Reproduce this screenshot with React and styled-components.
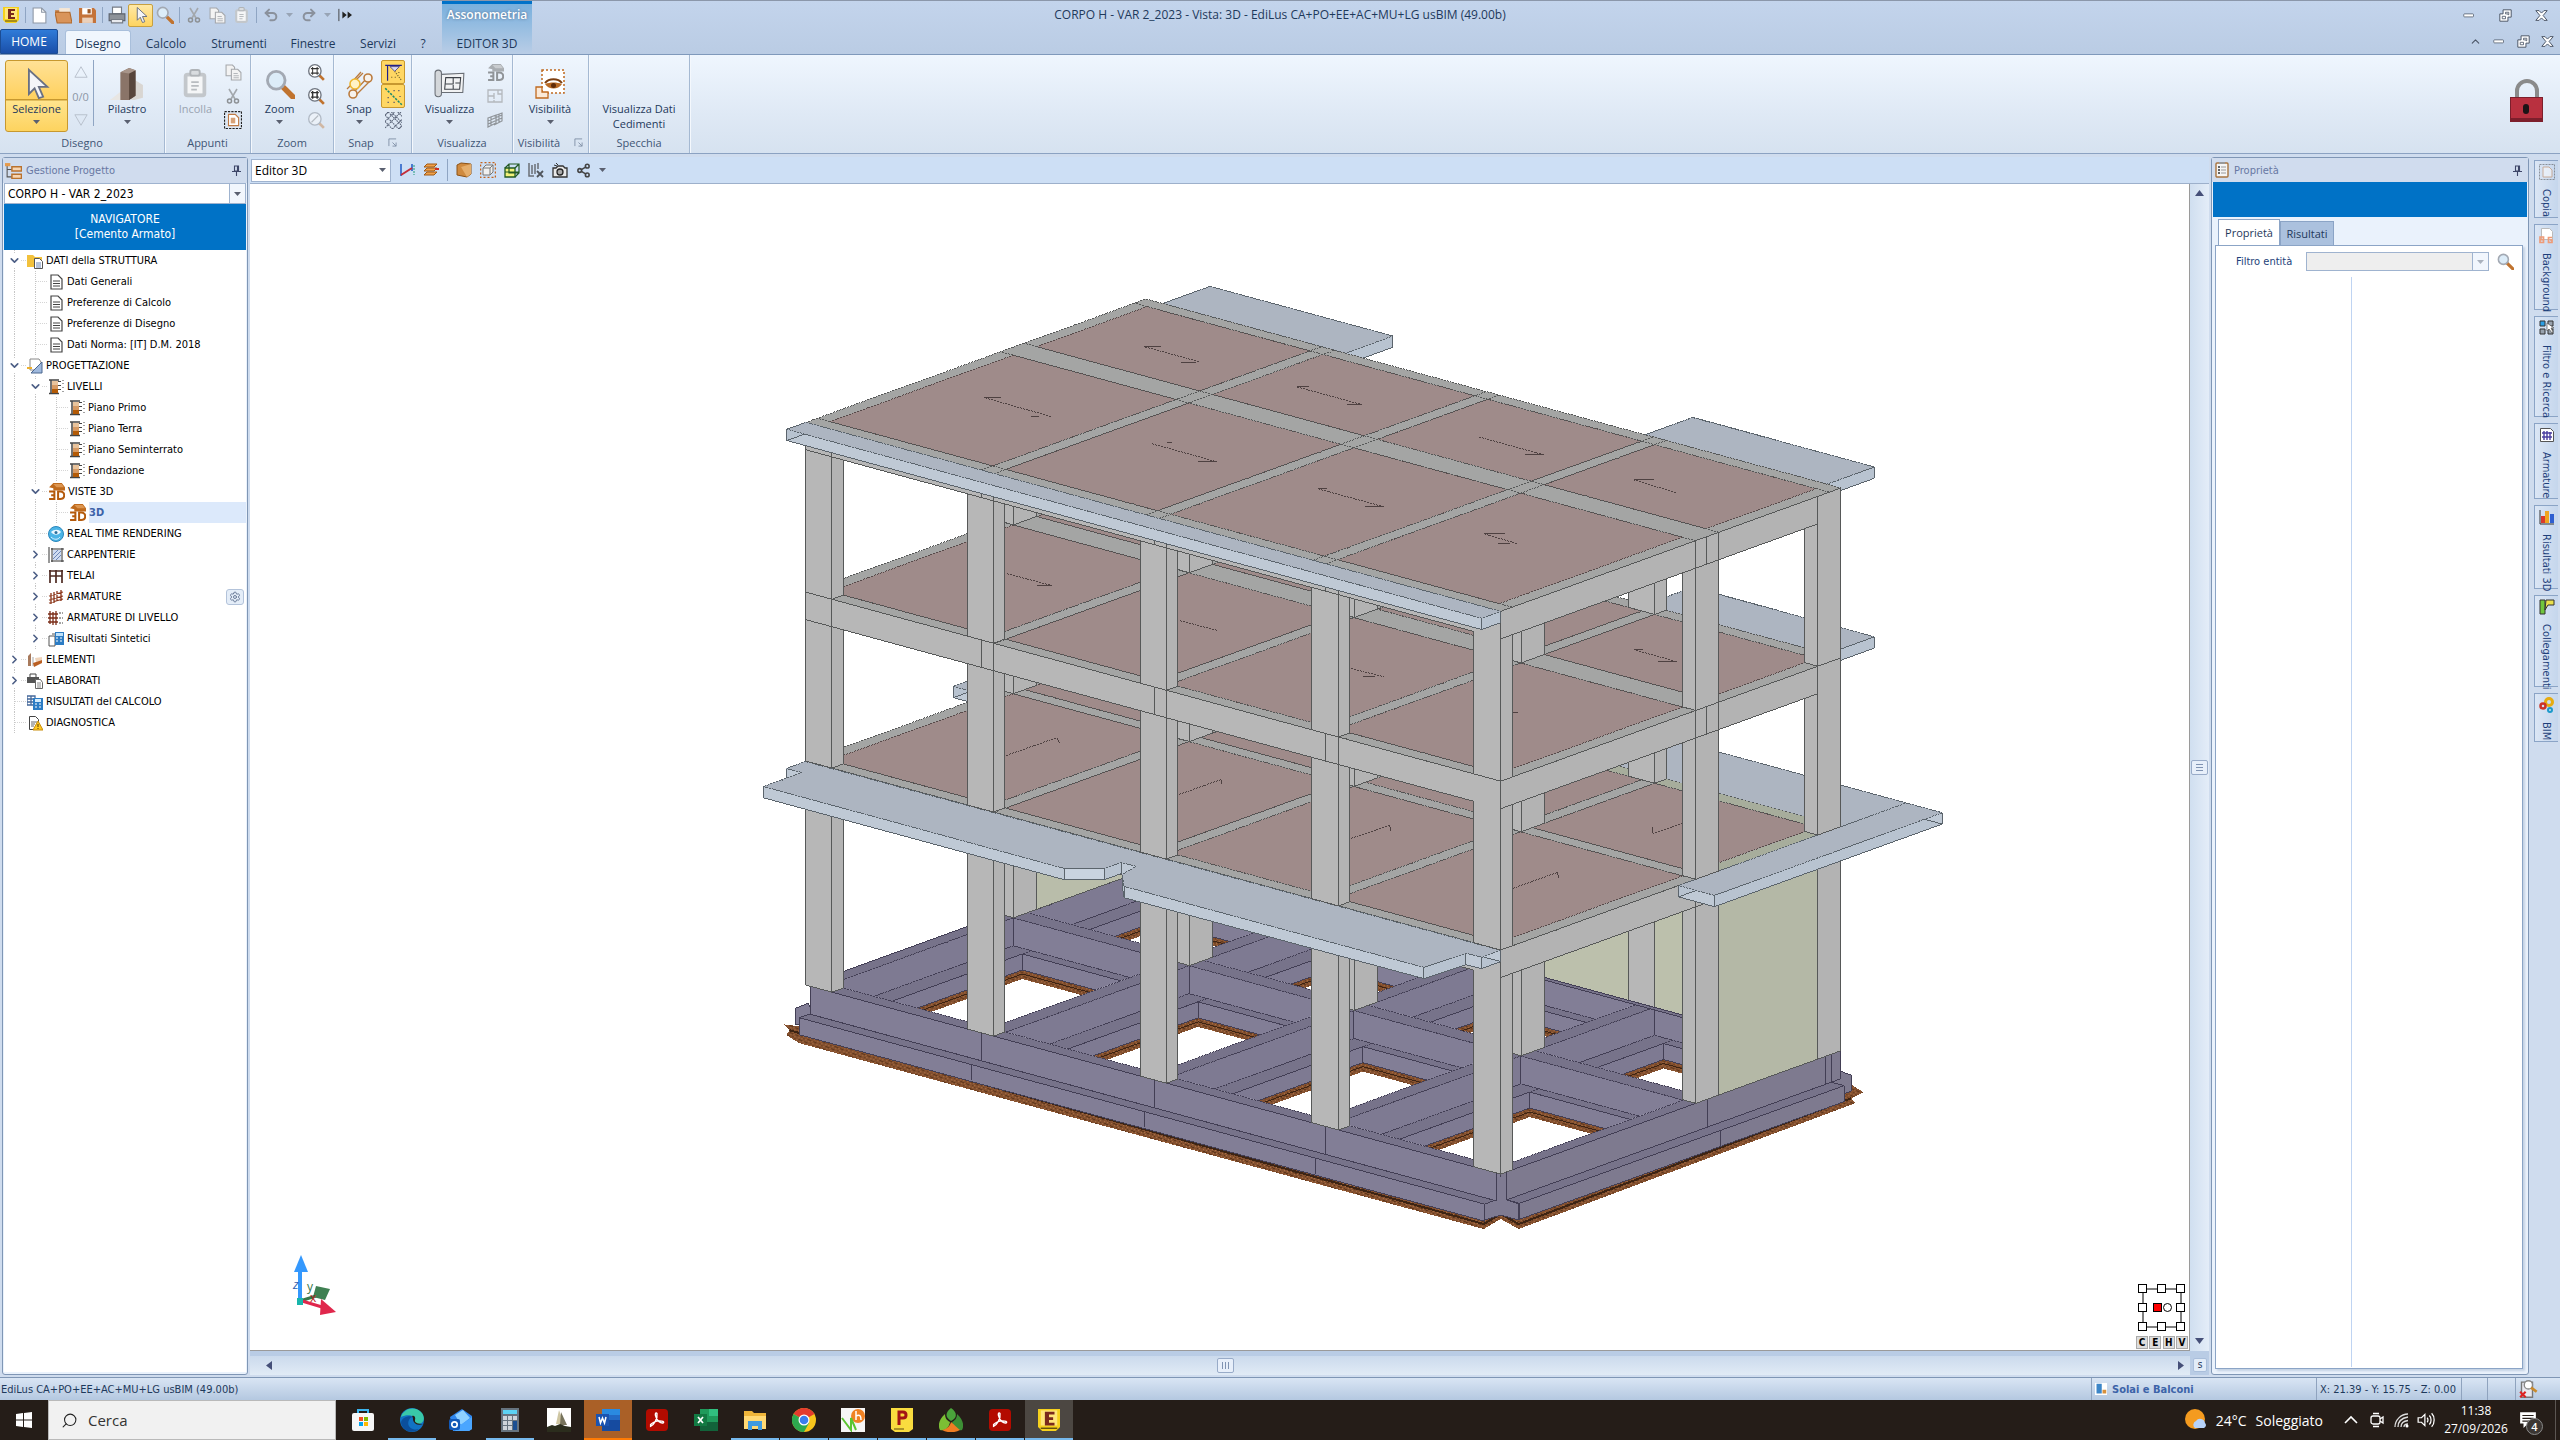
import React from "react";
import styled, { createGlobalStyle } from "styled-components";
import { ChevronDown, ChevronRight, Undo2, Redo2, Settings, Share2, Search, ChevronUp } from "lucide-react";

const GlobalStyle = createGlobalStyle`
  * { box-sizing: border-box; }
  body { margin: 0; font-family: "Open Sans", "Noto Sans", sans-serif; font-size: 12px; color: #1e395b; }
  button, select, input { font: inherit; color: inherit; margin: 0; padding: 0; border: 0; background: none; border-radius: 0; }
  ul { list-style: none; margin: 0; padding: 0; }
  svg { flex: none; }
`;

const tahoma = `"DejaVu Sans Condensed", "DejaVu Sans", sans-serif`;

/* ---------- 3D model ---------- */

const P = (a, b, z) => [1502 + b - a, z - 0.3625 * b - 0.272 * a];
const pts = (list) => list.map((p) => p.map((n) => Math.round(n * 10) / 10).join(",")).join(" ");
const topRect = (a0, a1, b0, b1, z) => [P(a0, b0, z), P(a1, b0, z), P(a1, b1, z), P(a0, b1, z)];
const frontFace = (a0, a1, b, z0, z1) => [P(a0, b, z0), P(a1, b, z0), P(a1, b, z1), P(a0, b, z1)];
const sideFace = (a, b0, b1, z0, z1) => [P(a, b0, z0), P(a, b1, z0), P(a, b1, z1), P(a, b0, z1)];

const INK = "#565858";
const DARK = "#423e54";
const W = 695.6;
const D = 340.6;
const LEVELS = [1175, 950.7, 781.7, 611.7];
const BAYS_A = [[13, 175], [188, 342], [355, 507], [520, 683]];
const FRONT = [[0, 26.9], [162.4, 189.3], [334.6, 360.7], [507.7, 533.5], [669.5, W]];
const MIDDLE = [[0, 13], [175, 188], [342, 355], [507, 520], [683, W]];
const BACK = [[0, 13], [175, 200.7], [342, 368], [507, 533], [669.5, W]];

const Face = ({ p, fill, ink = INK, dash }) => (
  <polygon points={pts(p)} fill={fill} stroke={ink} strokeWidth="1" strokeDasharray={dash ? "2 1" : undefined} />
);
const Edge = ({ p, ink = INK, dash }) => (
  <polyline points={pts(p)} fill="none" stroke={ink} strokeWidth="1" strokeDasharray={dash ? "2 1" : undefined} />
);

const Column = ({ a, b, top, bottom }) => (
  <g>
    <Face p={frontFace(a[0], a[1], b[0], top, bottom)} fill="#b7b7b7" />
    <Face p={sideFace(a[0], b[0], b[1], top, bottom)} fill="#b3b3b3" />
  </g>
);

const Columns = ({ storey }) => {
  const top = LEVELS[storey + 1];
  const bottom = LEVELS[storey];
  return (
    <g>
      {[...BACK].reverse().map((a, i) => (
        <Column key={i} a={a} b={i === 4 ? [317.4, D] : [329, D]} top={top} bottom={bottom} />
      ))}
      {storey === 0 && (
        <>
          <Face p={sideFace(683, 218.5, 329, top, bottom)} fill="#b9bdaa" />
          <Face p={frontFace(13, 175, 329, top, bottom)} fill="#bcc0ac" />
          <Face p={frontFace(201, 342, 329, top, bottom)} fill="#bcc0ac" />
          <Face p={topRect(13, 342, 325, 329, bottom)} fill="#77738a" ink={DARK} />
        </>
      )}
      {[...MIDDLE].reverse().map((a, i) => (
        <Column key={i} a={a} b={[195.4, 218.5]} top={top} bottom={bottom} />
      ))}
      {storey === 0 && <Face p={sideFace(0, 218.5, 317.4, top, bottom)} fill="#b4b8a6" />}
      {[...FRONT].reverse().map((a, i) => (
        <Column key={i} a={a} b={[0, 11.4]} top={top} bottom={bottom} />
      ))}
    </g>
  );
};

const Slab = ({ level }) => {
  const z = LEVELS[level];
  const h = z + 27.5;
  const bays = level === 1 ? [[11.5, 195], [206.5, 329]] : [[11.5, 195], [218.5, 329]];
  return (
    <g>
      <Face p={frontFace(0, W, 0, z, h)} fill="#b7b7b7" />
      <Face p={sideFace(0, 0, level === 1 ? 218.5 : D, z, h)} fill="#b3b3b3" />
      <polygon points={pts(frontFace(0.5, 26.4, 0, z + 2, h + 1))} fill="#b7b7b7" />
      <polygon points={pts(sideFace(0, 317.9, D - 1, z + 1, h + 1))} fill="#b3b3b3" />
      {FRONT.map(([a], i) => (
        <Edge key={i} p={[P(a, 0, z), P(a, 0, h)]} />
      ))}
      {[175, 347, 520].map((a) => (
        <Edge key={a} p={[P(a, 0, z), P(a, 0, h)]} />
      ))}
      {[195.4, 206.5, 218.5, 317.4].map((b) => (
        <Edge key={b} p={[P(0, b, z), P(0, b, h)]} />
      ))}
      <Face p={topRect(0, W, 0, D, z)} fill="#a4a5a4" dash />
      {level === 1 && (
        <>
          <polygon points={pts(topRect(0, 12, 218.5, 329, z))} fill="#a7ad9c" />
          <polygon points={pts(topRect(0, 345, 329, D, z))} fill="#a7ad9c" />
        </>
      )}
      {BAYS_A.map((a, i) =>
        bays.map((b, j) => <Face key={`${i}-${j}`} p={topRect(a[0], a[1], b[0], b[1], z)} fill="#9f8b8a" ink="#574a4a" dash />)
      )}
      {BAYS_A.slice(1).map(([a]) => (
        <g key={a}>
          <Edge p={[P(a, 0, z), P(a, D, z)]} dash />
          <Edge p={[P(a - 13, 0, z), P(a - 13, D, z)]} dash />
        </g>
      ))}
      {[11.5, bays[0][1], bays[1][0], 329].map((b) => (
        <Edge key={b} p={[P(0, b, z), P(W, b, z)]} dash />
      ))}
      <Edge p={[P(W, 0, z), P(0, 0, z), P(0, level === 1 ? 178 : D, z)]} />
    </g>
  );
};

const Balcony = ({ outline, t = 11.3 }) => (
  <g>
    {outline.map((p, i) => {
      const q = outline[(i + 1) % outline.length];
      const slope = (q[1] - p[1]) / (q[0] - p[0] || 1);
      const fill = slope > 0.1 ? "#bfc9d5" : slope < -0.1 ? "#b8c3d0" : "#c9d3df";
      return <Face key={i} p={[p, q, [q[0], q[1] + t], [p[0], p[1] + t]]} fill={fill} ink="#5b646c" />;
    })}
    <Face p={outline} fill="#adb5c1" ink="#5b646c" dash />
  </g>
);

const Arrows = ({ list }) => (
  <g>
    {list.map(([line, ...heads], i) => (
      <g key={i}>
        <Edge p={line} ink="#4e4141" dash />
        {heads.map((h, j) => (
          <Edge key={j} p={h} ink="#4e4141" />
        ))}
      </g>
    ))}
  </g>
);

const ROOF_ARROWS = [
  [[[1146, 347], [1201, 362]], [[1145, 347], [1162, 347]], [[1182, 363], [1197, 363]]],
  [[[986, 398], [1053, 417]], [[985, 398], [1002, 398]], [[1032, 417], [1040, 417]]],
  [[[1298, 387], [1364, 405]], [[1298, 387], [1310, 387]], [[1348, 405], [1363, 405]]],
  [[[1153, 444], [1218, 462]], [[1168, 443], [1173, 443]], [[1199, 462], [1217, 462]]],
  [[[1319, 489], [1385, 507]], [[1319, 489], [1328, 489]], [[1366, 507], [1385, 507]]],
  [[[1480, 437], [1545, 455]], [[1526, 455], [1545, 455]]],
  [[[1635, 480], [1678, 493]], [[1635, 480], [1655, 480]]],
  [[[1485, 534], [1519, 544]], [[1485, 534], [1506, 534]], [[1499, 544], [1511, 544]]],
];
const SECOND_ARROWS = [
  [[[1008, 574], [1053, 586]], [[1038, 586], [1053, 586]]],
  [[[1181, 621], [1219, 631]]],
  [[[1352, 669], [1385, 677]], [[1364, 677], [1376, 677]]],
  [[[1635, 650], [1678, 662]], [[1635, 650], [1644, 650]], [[1659, 662], [1678, 662]]],
  [[[1509, 711], [1518, 713]], [[1513, 713], [1519, 713]]],
];
const FIRST_ARROWS = [
  [[[1007, 756], [1058, 738]], [[1058, 738], [1060, 743]]],
  [[[1180, 795], [1222, 780]], [[1222, 780], [1223, 785]]],
  [[[1352, 839], [1391, 826]], [[1391, 826], [1392, 832]]],
  [[[1514, 889], [1559, 873]], [[1559, 873], [1560, 879]]],
  [[[1654, 834], [1684, 824]], [[1654, 828], [1654, 834]]],
];

const FRONT_BALCONY = [
  [806, 762], [787, 769], [803, 773], [764, 787], [1065, 869], [1105, 869], [1122, 863], [1137, 867],
  [1123, 875], [1125, 887], [1425, 968], [1467, 954], [1483, 958], [1502, 951],
];

const Foundation = () => {
  const z = LEVELS[0];
  const as = [[12, 175], [190, 342], [357, 507], [522, 683]];
  const bs = [[209.5, 329], [11.5, 195]];
  return (
    <g>
      <polygon
        points="784,1025 790,1031 787,1036 800,1044 1485,1230 1502,1220 1520,1230 1857,1104 1853,1099 1865,1093 1852,1085 1502,1120"
        fill="url(#soil)"
      />
      <polyline points="790,1031 1485,1225 1502,1215 1520,1225 1853,1099" fill="none" stroke="#3d2413" strokeWidth="2" />
      <Face p={[[796, 1009], [809, 1004], [818, 1026], [796, 1025]]} fill="#827e96" ink={DARK} />
      <Face p={[[1828, 1068], [1842, 1072], [1853, 1076], [1853, 1092], [1828, 1100]]} fill="#7e7a8f" ink={DARK} />
      <Face p={frontFace(6, 692, -10.2, z + 28, z + 45)} fill="#827e96" ink={DARK} />
      <Face p={topRect(6, 692, -10.2, 0, z + 28)} fill="#77738a" ink={DARK} />
      <Face p={sideFace(-12.7, 6, 331, z + 28, z + 44)} fill="#7e7a8f" ink={DARK} />
      <Face p={topRect(-12.7, 0, 6, 331, z + 28)} fill="#77738a" ink={DARK} />
      <polygon points="1486,1205 1498,1200 1508,1200 1520,1205 1520,1221 1502,1216 1486,1221" fill="#7f7b92" />
      <polyline points="1497,1201 1486,1205 1486,1221 1502,1216 1520,1221 1520,1205 1508,1201" fill="none" stroke={DARK} />
      <Face p={frontFace(0, 691, 0, z, z + 28)} fill="#827e96" ink={DARK} />
      <Face p={sideFace(0, 0, D, z, z + 28)} fill="#7e7a8f" ink={DARK} />
      <polygon points="1498,1178 1507,1178 1507,1208 1498,1208" fill="#7f7b92" />
      {[175, 347, 520].map((a) => (
        <g key={a}>
          <Edge p={[P(a, 0, z), P(a, 0, z + 28)]} ink={DARK} />
          <Edge p={[P(a, -10, z + 28), P(a, -10, z + 44)]} ink={DARK} />
        </g>
      ))}
      <Edge p={[P(4.6, 0, z), P(4.6, 0, z + 28)]} ink={DARK} />
      <Edge p={[P(0, 5.5, z), P(0, 5.5, z + 28)]} ink={DARK} />
      {[207, 325, 331].map((b) => (
        <Edge key={b} p={[P(0, b, z), P(0, b, z + 28)]} ink={DARK} />
      ))}
      <Edge p={[P(-12.7, 207.5, z + 28), P(-12.7, 207.5, z + 44)]} ink={DARK} />
      <Face p={topRect(0, W, 0, D, z)} fill="#77738a" ink={DARK} />
      {as.map((a, i) =>
        bs.map((b, j) => {
          const id = `bay-${i}-${j}`;
          const [a0, a1] = a;
          const [b0, b1] = b;
          const fa = a1 - 18;
          const fb = b1 - 9;
          return (
            <g key={id}>
              <clipPath id={id}>
                <polygon points={pts(topRect(a0, a1, b0, b1, z))} />
              </clipPath>
              <g clipPath={`url(#${id})`}>
                <polygon points={pts(topRect(a0, a1, b0, b1, z))} fill="#fff" />
                <polygon points={pts(frontFace(a0 - 60, fa, fb, z + 44, z + 53))} fill="url(#soil)" />
                <polygon points={pts(sideFace(fa, b0 - 60, fb, z + 44, z + 53))} fill="url(#soil)" />
                <Edge p={[P(a0 - 60, fb, z + 48), P(fa, fb, z + 48), P(fa, b0 - 60, z + 48)]} ink="#3d2413" />
                <Face p={frontFace(a0 - 60, a1, b1, z, z + 28)} fill="#827e96" ink={DARK} />
                <Face p={sideFace(a1, b0 - 60, b1, z, z + 28)} fill="#7e7a92" ink={DARK} />
                <Face p={topRect(a0 - 60, a1, fb, b1, z + 28)} fill="#77738a" ink={DARK} dash />
                <Face p={topRect(fa, a1, b0 - 60, b1, z + 28)} fill="#77738a" ink={DARK} dash />
                <Face p={frontFace(a0 - 60, fa, fb, z + 28, z + 44)} fill="#827e96" ink={DARK} />
                <Face p={sideFace(fa, b0 - 60, fb, z + 28, z + 44)} fill="#7e7a92" ink={DARK} />
              </g>
              <Edge p={[...topRect(a0, a1, b0, b1, z), P(a0, b0, z)]} ink={DARK} dash />
            </g>
          );
        })
      )}
    </g>
  );
};

const Building = () => (
  <ModelSvg viewBox="250 184 1941 1167" shapeRendering="crispEdges" role="img" aria-label="Modello 3D">
    <defs>
      <pattern id="soil" width="9" height="7" patternUnits="userSpaceOnUse">
        <rect width="9" height="7" fill="#84502f" />
        <path d="M1 1h1M5 0h2M3 3h1M7 4h2M0 5h2M4 6h1" stroke="#5b3418" />
        <path d="M3 1h1M7 2h1M1 3h1M5 4h1M2 6h1M8 6h1" stroke="#b07648" />
      </pattern>
    </defs>
    <Foundation />
    <Columns storey={0} />
    <Balcony outline={topRect(W, 729, 181, 330, LEVELS[1])} />
    <Balcony outline={[P(230, D, 950.7), P(230, 406, 950.7), P(-36, 406, 950.7), P(-36, 178, 950.7), P(0, 178, 950.7), P(0, D, 950.7)]} />
    <Slab level={1} />
    <Balcony outline={[P(-36, 406, 950.7), P(-36, 178, 950.7), P(0, 178, 950.7), P(0, 406, 950.7)]} />
    <Balcony outline={FRONT_BALCONY} />
    <Arrows list={FIRST_ARROWS} />
    <Columns storey={1} />
    <Balcony outline={topRect(14, 196, D, 388, LEVELS[2])} />
    <Slab level={2} />
    <Arrows list={SECOND_ARROWS} />
    <Columns storey={2} />
    <Balcony outline={topRect(496, 679, D, 388, LEVELS[3])} />
    <Balcony outline={topRect(14, 196, D, 388, LEVELS[3])} />
    <Slab level={3} />
    <Balcony outline={topRect(0, W, -19, 0, LEVELS[3])} />
    <Arrows list={ROOF_ARROWS} />
  </ModelSvg>
);

/* ---------- icons ---------- */

const Ic = ({ s = 16, v = 16, children }) => (
  <svg width={s} height={s} viewBox={`0 0 ${v} ${v}`} fill="none" aria-hidden="true">
    {children}
  </svg>
);
const Caret = ({ color = "#5a6070" }) => (
  <svg width="7" height="4" viewBox="0 0 7 4" aria-hidden="true">
    <path d="M0 0h7L3.500 4z" fill={color} />
  </svg>
);
const EIcon = ({ s = 16 }) => (
  <Ic s={s}>
    <path d="M0 0h16v13l-3 3H3l-3-3z" fill="#f6d11d" />
    <path d="M2 1h12v11H2z" fill="#ffe67a" />
    <path d="M5 2h7v2H8v2h3v2H8v2h4v2H5z" fill="#7a2a1c" />
    <path d="M2 14h12" stroke="#5d4a10" />
  </Ic>
);
const NewIcon = () => (
  <Ic s={17}><path d="M2 1h8l4 4v10H2z" fill="#fff" stroke="#8d97a5" /><path d="M10 1v4h4" stroke="#8d97a5" /></Ic>
);
const OpenIcon = () => (
  <Ic s={17}><path d="M0 3h5l1 2h8v10H2z" fill="#c47a3d" /><path d="M4 1h10v4H4z" fill="#f6e6d4" /><path d="M0 5h14l2 10H2z" fill="#d9945a" stroke="#b0682c" /></Ic>
);
const SaveIcon = () => (
  <Ic s={17}><path d="M0 1h14l2 2v12H0z" fill="#c4733a" /><path d="M3 1h9v6H3z" fill="#fff" /><path d="M3 10h10v5H3z" fill="#ead0bb" /><path d="M8 2h3v4H8z" fill="#9a5726" /></Ic>
);
const PrintIcon = () => (
  <Ic s={18}><path d="M4 1h8v6H4z" fill="#fff" stroke="#767c86" /><path d="M1 7h14v6H1z" fill="#8d9299" stroke="#5d636d" /><path d="M3 12h10v3H3z" fill="#e8eaee" stroke="#767c86" /></Ic>
);
const CursorIcon = ({ s = 18 }) => (
  <Ic s={s} v={24}><path d="M7 2v17l4-4 3 7 3-1-3-7h6z" fill="#f4f5f8" stroke="#697083" strokeWidth="1.300" /></Ic>
);
const LensIcon = ({ s = 18 }) => (
  <Ic s={s}>
    <path d="M9 9l6 6" stroke="#c0732f" strokeWidth="3" strokeLinecap="round" />
    <circle cx="6" cy="6" r="4.700" fill="#dcecf8" stroke="#a3a9b3" strokeWidth="1.500" />
  </Ic>
);
const CutIcon = ({ s = 16 }) => (
  <Ic s={s}><path d="M4 1l6 10M12 1L6 11" stroke="#a3a8ad" strokeWidth="1.600" /><circle cx="4.500" cy="13" r="2" stroke="#8d9195" strokeWidth="1.500" /><circle cx="11.500" cy="13" r="2" stroke="#8d9195" strokeWidth="1.500" /></Ic>
);
const CopyIcon = ({ s = 17 }) => (
  <Ic s={s}><path d="M1 1h6l2 2v8H1z" fill="#f3f3f3" stroke="#a5a8ac" /><path d="M6 5h6l3 3v7H6z" fill="#f3f3f3" stroke="#a5a8ac" /><path d="M8 9h4M8 11h5M8 13h5" stroke="#b5b8bc" /></Ic>
);
const PasteIcon = ({ s = 17 }) => (
  <Ic s={s}><rect x="2" y="2" width="12" height="13" rx="2" fill="#c3c7cb" /><path d="M4 4h8v9H4z" fill="#f5f6f7" /><rect x="5.500" y="0.500" width="5" height="3" rx="1" fill="#d9dcdf" stroke="#b0b4b8" /><path d="M6 7h4M6 9h4M6 11h3" stroke="#b8bcc0" /></Ic>
);
const SelectBoxIcon = () => (
  <Ic s={18}><rect x="0.500" y="0.500" width="15" height="15" stroke="#222" strokeDasharray="2 1" /><path d="M4 3h6l3 3v7H4z" fill="#fff" stroke="#bf7a45" /><path d="M6 6h4v5H6z" fill="#d9a277" /></Ic>
);
const PillarIcon = () => (
  <Ic s={34} v={32}>
    <path d="M0 31l9-7h3v7z" fill="#e8e6e3" /><path d="M20 10l11 7v12l-8 2h-3z" fill="#d9d6d2" />
    <path d="M10 5l8-4 6 2v24l-6 4h-8z" fill="#7b6559" /><path d="M10 5h8v26h-8z" fill="#8a7468" /><path d="M18 6l6-3v24l-6 4z" fill="#57453b" />
    <path d="M10 5l8-4 6 2-6 3z" fill="#a8958a" />
  </Ic>
);
const SnapIcon = () => (
  <Ic s={30} v={30}>
    <path d="M3 20L19 4M9 24L24 8M10 28L27 11M8 13L17 3" stroke="#bb7b3d" strokeWidth="1.300" />
    <circle cx="11" cy="15" r="5" fill="#fff3c4" stroke="#eeb62c" strokeWidth="1.600" />
    <circle cx="24" cy="9" r="4" fill="#f7f2ec" stroke="#bb7b3d" strokeWidth="1.600" />
    <circle cx="9" cy="25" r="4" fill="#f7f2ec" stroke="#bb7b3d" strokeWidth="1.600" />
  </Ic>
);
const PlanIcon = () => (
  <Ic s={32} v={30}>
    <path d="M7 6l21-1-1 18H6" fill="#f1f2f3" stroke="#6a6f76" /><path d="M1 5c0-4 6-4 6 0v19c0 4-6 4-6 0z" fill="#d4d7da" stroke="#6a6f76" />
    <path d="M11 9h14l-1 11H10zM18 9v6h-7M18 20v-4M25 14h-5" stroke="#3f4349" />
  </Ic>
);
const EyeIcon = () => (
  <Ic s={30} v={30}>
    <rect x="7" y="1" width="22" height="23" fill="#fff" stroke="#c06a1f" strokeDasharray="2 2" strokeWidth="1.500" />
    <path d="M1 18h6v5h6v6H1z" fill="#fbe9d7" stroke="#c06a1f" strokeWidth="1.300" />
    <path d="M10 14c4-5 13-5 17 0" stroke="#7b3e10" strokeWidth="2" /><path d="M10 15c4 6 13 6 17 0-5-2-12-2-17 0z" fill="#b86a25" />
    <circle cx="18.500" cy="16.500" r="2.500" fill="#5e2c09" />
  </Ic>
);
const SnapEndIcon = () => (
  <Ic s={19}><path d="M1 2h14M3 2v13" stroke="#20208a" /><path d="M5 3h8L9 7z" fill="#d8d8f0" stroke="#20208a" strokeWidth="0.600" /><path d="M9 7l6 8M6 12h1M9 12h1M12 8h1" stroke="#77692c" strokeDasharray="1 1" /></Ic>
);
const SnapDotsIcon = () => (
  <Ic s={19}><path d="M1 1l14 14" stroke="#1c8a6c" strokeDasharray="2 1" strokeWidth="1.300" /><path d="M8 3h1M12 3h1M13 8h1M3 9h1M3 13h1M8 13h1" stroke="#4b4b6b" /></Ic>
);
const MeshIcon = () => (
  <Ic s={17}><path d="M0 3l3-3 13 13-3 3L0 3M0 9l7 7M0 15l15-15M0 9l9-9M7 16l9-9M13 16l3-3M6 0l10 10M12 0l4 4M3 0L0 3" stroke="#5a6478" strokeDasharray="1.500 0.700" /></Ic>
);
const ThreeDIcon = ({ grey }) => (
  <Ic s={17}>
    <path d="M1 4l4-4h8l3 4v3H5V5z" fill={grey ? "#a9adb1" : "#bf6a1c"} /><path d="M5 1h8l2 3H8z" fill={grey ? "#c9cccf" : "#dd9650"} />
    <path d="M1 8h5v7H1M3 11.500h3M9.500 8v7h2c5 0 5-7 0-7z" stroke={grey ? "#909498" : "#b45a0c"} strokeWidth="1.900" />
  </Ic>
);
const FloorIcon = () => (
  <Ic s={16}><path d="M1 2h14v12H1zM1 8h6M7 5v6M7 14v-2M11 2v4h4" stroke="#b4b8bd" strokeWidth="1.300" /></Ic>
);
const WavesIcon = () => (
  <Ic s={16}><path d="M1 6l8-3v8l-8 4zM7 4l8-3v8l-8 4M1 9l14-6M1 12l14-6M4 5v8M12 2v8" stroke="#8f9499" strokeWidth="1.200" /></Ic>
);
const ZoomKind = ({ kind }) => (
  <Ic s={18}>
    <g opacity={kind === "last" ? 0.4 : 1}>
      <path d="M10 10l5 5" stroke="#c0732f" strokeWidth="2.400" /><circle cx="7" cy="7" r="5.500" fill="#fff" stroke="#707680" strokeWidth="1.200" />
      {kind === "last" ? <path d="M4 10l6-6" stroke="#777" /> : <path d="M5 3.500v7M9 3.500v7M3.500 5h7M3.500 9h7" stroke="#333" strokeWidth={kind === "all" ? 1.300 : 0.9} />}
    </g>
  </Ic>
);
const PinIcon = () => (
  <Ic s={11} v={11}><path d="M3.500 1h4v5h-4zM6.500 1v5M1 6.500h9M5.500 7v4" stroke="#3d4668" strokeWidth="1.100" /></Ic>
);
const TreeRootIcon = () => (
  <Ic s={17}><path d="M2 3v11h5M2 7h5" stroke="#555" /><path d="M0 1h5v3H0z" fill="#e59a4c" /><path d="M6.500 4.500h9v4h-9zM6.500 11.500h9v4h-9z" fill="#f7d5b1" stroke="#b9722f" strokeWidth="1.400" /></Ic>
);
const ListIcon = () => (
  <Ic s={16}><rect x="2" y="1" width="12" height="14" rx="1" fill="#f5f5f5" stroke="#a8743f" strokeWidth="1.400" /><path d="M5 0h6v2H5z" fill="#999" /><path d="M4 5h2M4 8h2M4 11h2" stroke="#333" strokeWidth="1.500" /><path d="M7 5h5M7 8h5M7 11h5" stroke="#999" /></Ic>
);

const treeIcons = {
  folder: <Ic><path d="M0 2h6l2 2h7v10H0z" fill="#f2c13c" /><path d="M7.500 5.500h5l3 3v7h-8z" fill="#fff" stroke="#555" /><path d="M9 10h5M9 12h5M9 14h5" stroke="#6b86b5" /></Ic>,
  doc: <Ic><path d="M3 1h7l4 4v10H3z" fill="#fff" stroke="#444" strokeWidth="1.200" /><path d="M5 7h7M5 9.500h7M5 12h7" stroke="#444" /></Ic>,
  project: <Ic><path d="M3 1h9l2 3v8H3z" fill="#fff" stroke="#888" /><path d="M4 15L15 4v11z" fill="#9fb9dd" stroke="#4a668f" /><path d="M0 9h5v2H0z" fill="#eeb02e" /></Ic>,
  level: <Ic><path d="M1 1h10M3 1v14M1 14.500h10" stroke="#444" strokeWidth="1.500" /><path d="M4 2h6v4H4z" fill="#e8c39c" /><path d="M4 6h6v4H4z" fill="#d69a64" /><path d="M4 10h6v4H4z" fill="#b35a06" /><path d="M10 2.500h3M10 6.500h3M10 10.500h3M15 1v1M15 4v1M15 8v1M15 12v1" stroke="#444" /></Ic>,
  three: <ThreeDIcon />,
  globe: <Ic><circle cx="8" cy="8" r="7.500" fill="#4bb4e6" stroke="#2a86bb" /><path d="M3 6c3-3 8-3 10 0-2 3-7 4-10 0z" fill="#eaf7ff" /><circle cx="8" cy="6.500" r="1.500" fill="#2a6f9c" /><path d="M3 11c3 3 7 3 9 0" stroke="#d3efff" /></Ic>,
  formwork: <Ic><path d="M1 0v16M3 2h13M3 14h13M4 1v14M14 1v14" stroke="#333" /><path d="M5 3h8v10H5z" fill="#cfdcf2" /><path d="M5 8l5-5M5 12l8-8M8 13l5-5" stroke="#6c86b8" /></Ic>,
  frame: <Ic><path d="M2 2v13M8 2v13M14 2v13M1 3h14M2 8h12" stroke="#4f2b23" strokeWidth="1.700" /></Ic>,
  rebar: <Ic><path d="M3 4v11M6 3v11M9 2v11M13 1v11M1 7l14-4M1 11l14-4M1 14l14-4" stroke="#8a3418" strokeWidth="1.300" /></Ic>,
  rebarLevel: <Ic><path d="M2 1v13M5 2v13M8 1v14M0 4h10M0 8h10M0 12h10" stroke="#7a2c18" strokeWidth="1.300" /><path d="M11 3h4M11 8h4M11 13h4" stroke="#444" strokeDasharray="2 1" /></Ic>,
  results: <Ic><path d="M1 5h6v10H1zM4 3h6" stroke="#555" /><path d="M7 1h9v13H7z" fill="#2c7cc4" /><path d="M8 2h7v3H8z" fill="#bfe2fb" /><path d="M8 7h2M12 7h2M8 10h2M12 10h2" stroke="#fff" /></Ic>,
  elements: <Ic><path d="M1 4l3-3v13H1z" fill="#a87a5c" /><path d="M5 5h2v9H5z" fill="#d3d3d3" /><path d="M8 6l7-1v3l-6 2z" fill="#f0d4bb" /><path d="M6 11l9-3v3l-8 4z" fill="#ba5f22" /></Ic>,
  printed: <Ic><path d="M3 1h6v4H3z" fill="#fff" stroke="#444" /><path d="M0 4h12v6H0z" fill="#555" /><path d="M8.500 6.500h5l2 3v6h-7z" fill="#fff" stroke="#666" /><path d="M10 10h4M10 12h4M10 14h4" stroke="#888" /></Ic>,
  calcResults: <Ic><path d="M0 2h8v9H0zM0 5h8M0 8h8M4 2v9" stroke="#44689b" strokeWidth="1.300" /><path d="M6 4h10v12H6z" fill="#2c7cc4" /><path d="M8 5h6v3H8z" fill="#d5ecfc" /><path d="M8 10h2M12 10h2M8 13h2M12 13h2" stroke="#fff" /></Ic>,
  warning: <Ic><path d="M2.500 1.500h6l3 3v10h-9z" fill="#fff" stroke="#444" /><path d="M4 7h6M4 9h4M4 11h3" stroke="#666" /><path d="M11 6l5 9H6z" fill="#ffc81e" stroke="#c98d0c" /><path d="M11 9v3M11 13v1" stroke="#5b3b00" /></Ic>,
};

/* ---------- window frame ---------- */

const Screen = styled.div`
  height: 100vh;
  display: flex;
  flex-direction: column;
  background: #cbd9ec;
`;
const Header = styled.header`
  display: grid;
  grid-template-columns: 442px 90px 1fr 532px;
  height: 55px;
  border-top: 1px solid #8b97aa;
  border-bottom: 1px solid #7f99bb;
  background: linear-gradient(#c3d4ec, #bacce4);
`;
const Quick = styled.div`
  display: flex;
  align-items: center;
  gap: 7px;
  height: 28px;
  padding-left: 2px;
`;
const QuickButton = styled.button`
  display: flex;
  align-items: center;
  justify-content: center;
  width: 17px;
  height: 23px;
  color: #8a919c;
  ${(p) => p.$on && `width: 25px; margin: 0 -4px; border: 1px solid #c7a041; border-radius: 2px; background: linear-gradient(#ffe9a6, #ffd460);`}
`;
const Divider = styled.span`
  width: 1px;
  height: ${(p) => p.$h || 16}px;
  background: #8fa5c3;
`;
const QuickDivider = styled(Divider)`
  margin: 0 -2px 0 -1px;
`;
const TabRow = styled.nav`
  display: flex;
  align-items: flex-end;
  height: 25px;
`;
const Tab = styled.button`
  width: ${(p) => p.$w}px;
  height: 24px;
  padding-top: 2px;
  color: #1e395b;
  ${(p) => p.$home && `color: #fff; background: linear-gradient(#2f7bd8, #1a4fa9); border: 1px solid #1b4c94; border-radius: 2px 2px 0 0; margin-right: 7px; height: 25px; padding: 0;`}
  ${(p) => p.$active && `background: #f0f6fd; border: 1px solid #a9bfdb; border-bottom: 0; border-radius: 3px 3px 0 0;`}
`;
const ContextTab = styled.button`
  display: flex;
  flex-direction: column;
  justify-content: space-between;
  align-items: center;
  padding: 2px 0;
  border-top: 3px solid #0072c9;
  background: linear-gradient(#79b0dd, #b9cde6);
  strong { color: #fff; font-size: 12px; font-weight: 600; text-shadow: 0 0 3px #4d6888; }
`;
const Title = styled.h1`
  margin: 0;
  padding-top: 5px;
  text-align: center;
  font-size: 12px;
  font-weight: 400;
  white-space: nowrap;
`;
const WindowButtons = styled.div`
  display: flex;
  flex-direction: column;
  align-items: flex-end;
  padding: 4px 6px 0 0;
  gap: 6px;
`;
const ButtonLine = styled.div`
  display: flex;
  gap: ${(p) => p.$gap}px;
  padding-right: ${(p) => p.$end || 0}px;
  button { width: 14px; height: 20px; display: grid; place-items: center; }
`;
const Minimize = () => <Ic s={12}><rect x="1" y="6.500" width="13" height="4" rx="1" fill="#fff" stroke="#4b5566" /></Ic>;
const Restore = () => <Ic s={13}><path d="M5 1h10v9h-4v5H1V6h4z" fill="#fff" stroke="#4b5566" strokeWidth="1.200" /><path d="M4 9h4v3H4zM8 4h4v3h-1V6H8z" stroke="#4b5566" /></Ic>;
const Close = () => <Ic s={13}><path d="M1 2h4l3 3 3-3h4l-5 6 5 6h-4l-3-3-3 3H1l5-6z" fill="#fff" stroke="#4b5566" strokeWidth="1.200" /></Ic>;

/* ---------- ribbon ---------- */

const Ribbon = styled.section`
  display: flex;
  height: 99px;
  border-bottom: 1px solid #8ba2c2;
  background: linear-gradient(#eff6fe, #dfe9f5 60%, #d6e2f0);
`;
const Group = styled.div`
  width: ${(p) => p.$w}px;
  display: flex;
  flex-direction: column;
  border-right: 1px solid #a5b9d2;
  box-shadow: 1px 0 0 #f4f8fd;
`;
const GroupBody = styled.div`
  display: flex;
  flex: 1;
  padding: 5px 4px 0 ${(p) => p.$left || 5}px;
`;
const GroupLabel = styled.div`
  display: flex;
  align-items: center;
  justify-content: center;
  height: 21px;
  font-size: 11px;
  color: #3f5675;
  gap: 14px;
`;
const BigButton = styled.button`
  display: flex;
  flex-direction: column;
  align-items: center;
  width: ${(p) => p.$w}px;
  height: 72px;
  padding-top: 5px;
  font-size: 11px;
  line-height: 15px;
  color: ${(p) => (p.$off ? "#9aa4b1" : "#1e395b")};
  border: 1px solid transparent;
  ${(p) => p.$on && `border-color: #c7982f; border-radius: 3px; background: linear-gradient(#ffe196, #ffd15e 38px, #c7982f 38px, #c7982f 39px, #ffe48d 40px, #fdd35f);`}
  > svg { margin-top: 4px; }
`;
const BigIcon = styled.span`
  display: grid;
  place-items: center;
  height: 35px;
`;
const SmallStack = styled.div`
  display: flex;
  flex-direction: column;
  align-items: center;
  width: 26px;
  font-size: 11px;
  color: #8c97a6;
`;
const SmallButton = styled.button`
  display: grid;
  place-items: center;
  width: 24px;
  height: 24px;
  ${(p) => p.$on && `border: 1px solid #c7982f; border-radius: 2px; background: #ffd764;`}
`;
const LockButton = styled.button`
  margin: 24px 16px 0 auto;
  align-self: flex-start;
`;
const Triangle = ({ down }) => (
  <Ic s={14}><path d={down ? "M1 2h14L8 14z" : "M1 14h14L8 2z"} stroke="#b4bcc7" /></Ic>
);
const Launcher = () => (
  <Ic s={9} v={10}><path d="M1 9V1h8M5 5l4 4M9 5v4H5" stroke="#7f8fa6" /></Ic>
);

/* ---------- workspace ---------- */

const Work = styled.main`
  display: flex;
  flex: 1;
  min-height: 0;
  padding: 3px 0 2px 2px;
  background: #cfdcee;
`;
const Dock = styled.section`
  width: ${(p) => p.$w}px;
  display: flex;
  flex-direction: column;
  border: 1px solid #7f96b5;
  border-radius: 3px;
  padding: 0 1px 2px;
  background: #eaf2fc;
`;
const DockTitle = styled.div`
  display: flex;
  align-items: center;
  height: ${(p) => p.$h}px;
  margin: 0 -1px;
  padding: 0 5px 0 2px;
  gap: 4px;
  background: #d0dcee;
  font-family: ${tahoma};
  font-size: 11px;
  color: #6878a3;
  span { flex: 1; }
`;
const Combo = styled.div`
  display: flex;
  align-items: center;
  width: ${(p) => (p.$w ? p.$w + "px" : "auto")};
  height: ${(p) => p.$h}px;
  border: 1px solid #9fb3cf;
  background: ${(p) => (p.$off ? "#eee" : "#fff")};
  color: #000;
  select {
    flex: 1;
    min-width: 0;
    height: 100%;
    padding-left: 3px;
    appearance: none;
    font-family: ${(p) => (p.$ui ? "inherit" : tahoma)};
    font-size: 12px;
  }
`;
const ComboArrow = styled.span`
  display: grid;
  place-items: center;
  width: 16px;
  height: 100%;
  pointer-events: none;
  ${(p) => p.$box && `border-left: 1px solid #9fb3cf; background: #f1f6fd;`}
`;
const Banner = styled.div`
  height: ${(p) => p.$h}px;
  padding-top: 8px;
  background: #0072c6;
  color: #fff;
  font-family: ${tahoma};
  font-size: 12px;
  line-height: 15px;
  text-align: center;
`;
const Tree = styled.ul`
  flex: 1;
  background: #fff;
  font-family: ${tahoma};
  font-size: 11px;
  color: #000;
`;
const Row = styled.li`
  display: flex;
  align-items: center;
  height: 21px;
  padding-left: 10px;
`;
const Guide = styled.span`
  width: 21px;
  height: 21px;
  border-left: 1px dotted #c6c6c6;
`;
const Junction = styled.span`
  position: relative;
  width: 13px;
  height: 21px;
  border-left: 1px dotted #c6c6c6;
  background: linear-gradient(90deg, #d5d5d5 50%, transparent 0) 0 10px / 2px 1px repeat-x;
  svg { position: absolute; left: -7px; top: 4px; background: #fff; color: #4d5f86; }
`;
const RowLabel = styled.span`
  flex: 1;
  margin-left: 3px;
  line-height: 21px;
  white-space: nowrap;
  ${(p) => p.$on && `background: #dce9fb; color: #3c63a8; font-weight: 700;`}
`;
const GearButton = styled.button`
  display: grid;
  place-items: center;
  width: 18px;
  height: 16px;
  margin-right: 2px;
  border: 1px solid #b3c3da;
  border-radius: 3px;
  background: #e4edf8;
  color: #6b7c99;
`;
const Editor = styled.section`
  display: flex;
  flex: 1;
  min-width: 0;
  flex-direction: column;
  margin: 0 2px 0 2px;
`;
const EditorBar = styled.div`
  display: flex;
  align-items: center;
  height: 27px;
  gap: 8px;
  padding-left: 1px;
  background: #cddff5;
  border-bottom: 1px solid #9db0cb;
  button { display: flex; }
`;
const ViewGrid = styled.div`
  display: grid;
  flex: 1;
  min-height: 0;
  grid-template: minmax(0, 1fr) 24px / minmax(0, 1fr) 19px;
  background: #b9cce5;
`;
const Canvas = styled.div`
  position: relative;
  background: #fff;
  border-right: 1px solid #9a9a9a;
  border-bottom: 1px solid #9a9a9a;
  overflow: hidden;
`;
const ModelSvg = styled.svg`
  display: block;
  width: 100%;
  height: 100%;
`;
const Axes = styled.svg`
  position: absolute;
  left: 40px;
  bottom: 33px;
`;
const Picker = styled.div`
  position: absolute;
  right: 1px;
  bottom: 1px;
  display: flex;
  flex-direction: column;
  gap: 4px;
`;
const PickerKeys = styled.div`
  display: flex;
  justify-content: space-between;
  button {
    width: 12px;
    height: 13px;
    border: 1px solid #aaa;
    background: #ddd;
    color: #000;
    font: 700 10px/11px ${tahoma};
  }
`;
const ScrollBar = styled.div`
  display: flex;
  flex-direction: ${(p) => (p.$v ? "column" : "row")};
  align-items: center;
  justify-content: space-between;
  padding: ${(p) => (p.$v ? "5px 0" : "0 4px 0 15px")};
  margin-top: ${(p) => (p.$v ? 0 : 5)}px;
  background: ${(p) => (p.$v ? "linear-gradient(90deg, #d0dff0, #e4edf8)" : "linear-gradient(#cbdaec, #e1ebf6)")};
`;
const Thumb = styled.span`
  width: 17px;
  height: 15px;
  border: 1px solid #98abc8;
  border-radius: 2px;
  background: repeating-linear-gradient(${(p) => (p.$v ? "0deg" : "90deg")}, #7f93b2 0 1px, transparent 1px 3px) center / 7px 7px no-repeat, #e7effa;
`;
const ScrollCorner = styled.button`
  margin: 7px 2px 3px 3px;
  border: 1px solid #a9bedb;
  border-radius: 2px;
  background: #e2ecf8;
  font: 10px/10px ${tahoma};
`;
const Arrow = ({ d }) => (
  <svg width="9" height="9" viewBox="0 0 9 9" aria-hidden="true"><path d={d} fill="#454f78" /></svg>
);

/* ---------- properties ---------- */

const PropTabs = styled.div`
  display: flex;
  align-items: flex-end;
  height: 28px;
  padding-left: 5px;
`;
const PropTab = styled.button`
  width: ${(p) => p.$w}px;
  height: ${(p) => (p.$on ? 26 : 24)}px;
  border: 1px solid #8ba4c6;
  border-bottom: 0;
  background: ${(p) => (p.$on ? "#fff" : "#abc1de")};
  font-size: 11px;
`;
const PropBody = styled.div`
  flex: 1;
  display: flex;
  flex-direction: column;
  margin: 0 4px 3px 2px;
  border: 1px solid #8ba4c6;
  box-shadow: 2px 2px 2px #c3d1e4;
  background: #fff;
`;
const FilterRow = styled.div`
  display: flex;
  align-items: center;
  gap: 8px;
  margin: 6px 8px 6px 20px;
  font-family: ${tahoma};
  font-size: 11px;
  color: #1e3f7a;
  label { width: 62px; white-space: nowrap; }
`;
const Split = styled.div`
  flex: 1;
  width: 136px;
  border-right: 1px solid #bfd4f2;
  margin-bottom: 1px;
`;
const SideTabs = styled.nav`
  display: flex;
  flex-direction: column;
  gap: 6px;
  margin: 3px 2px 0 5px;
`;
const SideTab = styled.button`
  display: flex;
  flex-direction: column;
  align-items: center;
  gap: 9px;
  width: 24px;
  height: ${(p) => p.$h}px;
  padding-top: 3px;
  border: 1px solid #8ba4c6;
  border-right: 0;
  background: linear-gradient(90deg, #dbe6f5, #c5d6ec);
  font-family: ${tahoma};
  font-size: 11px;
  color: #1e3f7a;
  span { writing-mode: vertical-rl; line-height: 13px; white-space: nowrap; }
`;

/* ---------- status and task bar ---------- */

const Status = styled.footer`
  display: flex;
  height: 23px;
  border-top: 1px solid #7f96b5;
  background: linear-gradient(#d9e5f4, #b4c8e0);
  font-family: ${tahoma};
  font-size: 11px;
  line-height: 21px;
`;
const StatusCell = styled.div`
  display: flex;
  align-items: center;
  gap: 5px;
  width: ${(p) => (p.$w ? p.$w + "px" : "auto")};
  flex: ${(p) => (p.$w ? "none" : 1)};
  padding-left: ${(p) => p.$pad || 1}px;
  border-right: 1px solid #8fa3be;
  white-space: nowrap;
  strong { color: #3c63a8; }
`;
const StatusEnd = styled.div`
  width: 44px;
`;
const Taskbar = styled.footer`
  display: flex;
  height: 40px;
  background: #251d18;
  color: #fff;
`;
const StartButton = styled.button`
  width: 48px;
  display: grid;
  place-items: center;
`;
const SearchBox = styled.label`
  display: flex;
  align-items: center;
  gap: 10px;
  width: 288px;
  padding-left: 12px;
  margin-right: 3px;
  background: #f1f1f1;
  border: 1px solid #b9b9b9;
  color: #222;
  input { width: 200px; font-size: 15px; outline: 0; }
  input::placeholder { color: #333; opacity: 1; }
`;
const TaskButton = styled.button`
  display: grid;
  place-items: center;
  width: 48px;
  margin-right: 1px;
  background: ${(p) => p.$bg || "none"};
  box-shadow: ${(p) => (p.$open ? `inset 0 -2px 0 ${p.$line || "#76b9ed"}` : "none")};
`;
const Tray = styled.div`
  display: flex;
  align-items: center;
  margin-left: auto;
  font-size: 14px;
  gap: 8px;
`;
const Weather = styled.div`
  display: flex;
  align-items: center;
  gap: 9px;
  margin-right: 10px;
`;
const Clock = styled.time`
  width: 66px;
  font-size: 12px;
  line-height: 18px;
  text-align: center;
  white-space: nowrap;
`;
const Notice = styled.button`
  position: relative;
  width: 39px;
  height: 40px;
  border-right: 1px solid #5c5652;
  padding: 4px 0 0 2px;
  margin-right: 4px;
  text-align: left;
`;
const Badge = styled.span`
  position: absolute;
  left: 9px;
  top: 18px;
  width: 17px;
  height: 17px;
  border: 1px solid #8a8a8a;
  border-radius: 50%;
  background: #3b3633;
  color: #fff;
  font: 600 11px/15px "Open Sans", sans-serif;
  text-align: center;
`;

const tree = [
  [0, "open", "folder", "DATI della STRUTTURA"],
  [1, "", "doc", "Dati Generali"],
  [1, "", "doc", "Preferenze di Calcolo"],
  [1, "", "doc", "Preferenze di Disegno"],
  [1, "", "doc", "Dati Norma: [IT] D.M. 2018"],
  [0, "open", "project", "PROGETTAZIONE"],
  [1, "open", "level", "LIVELLI"],
  [2, "", "level", "Piano Primo"],
  [2, "", "level", "Piano Terra"],
  [2, "", "level", "Piano Seminterrato"],
  [2, "", "level", "Fondazione"],
  [1, "open", "three", "VISTE 3D"],
  [2, "", "three", "3D"],
  [1, "", "globe", "REAL TIME RENDERING"],
  [1, "closed", "formwork", "CARPENTERIE"],
  [1, "closed", "frame", "TELAI"],
  [1, "closed", "rebar", "ARMATURE"],
  [1, "closed", "rebarLevel", "ARMATURE DI LIVELLO"],
  [1, "closed", "results", "Risultati Sintetici"],
  [0, "closed", "elements", "ELEMENTI"],
  [0, "closed", "printed", "ELABORATI"],
  [0, "", "calcResults", "RISULTATI del CALCOLO"],
  [0, "", "warning", "DIAGNOSTICA"],
];

const sideTabs = [
  ["Copia", 58, <Ic key="i"><g opacity="0.500"><rect x="0.500" y="0.500" width="15" height="15" stroke="#444" strokeDasharray="2 1" /><path d="M4 3h6l3 3v7H4z" fill="#fff" stroke="#bf7a45" /></g></Ic>],
  ["Background", 86, <Ic key="i"><path d="M2.500 0.500h8l3 3v8h-11z" fill="#fff" stroke="#bbb" /><path d="M1 9h3.500v5.500H1zM1 11.700h4M13 9.500H9.500v5H13V12h-2" stroke="#ee9c79" strokeWidth="1.700" /></Ic>],
  ["Filtro e Ricerca", 101, <Ic key="i"><path d="M1 1h5v5H1z" fill="#2c9fe4" stroke="#333" /><path d="M9 1h5v5H9zM1 9h5v5H1zM9 9h5v5H9z" fill="#98a2ad" stroke="#333" /><path d="M8 3v8l2-2 3 4 1-1-2-4h3z" fill="#fff" stroke="#555" strokeWidth="0.700" /></Ic>],
  ["Armature", 76, <Ic key="i"><path d="M1.500 1.500h10l3 3v10h-13z" fill="#fff" stroke="#555" /><path d="M5 4v9M8 4v9M11 5v8M3 6h10M3 10h10" stroke="#4b3fa0" strokeWidth="1.400" /></Ic>],
  ["Risultati 3D", 84, <Ic key="i"><path d="M1 1v14h14" stroke="#333" /><path d="M2 7h4v7H2z" fill="#d93a2b" /><path d="M6 2h4v12H6z" fill="#f0a51e" /><path d="M11 5h4v9h-4z" fill="#2f5fd0" /></Ic>],
  ["Collegamenti", 92, <Ic key="i"><path d="M1 1h5v14H1z" fill="#70c63d" stroke="#333" /><path d="M7 1h8v5H9L6 11z" fill="#e9e04c" stroke="#333" /></Ic>],
  ["BIM", 49, <Ic key="i"><circle cx="10" cy="5" r="3.500" stroke="#e6ac12" strokeWidth="3" /><circle cx="4" cy="9" r="2.500" stroke="#cc3227" strokeWidth="2.500" /><circle cx="11" cy="13" r="2" stroke="#1c9acb" strokeWidth="2" /></Ic>],
];

const editorIcons = [
  <Ic key="1"><path d="M2 2v12M13 2v7" stroke="#2a62c9" strokeWidth="1.600" /><path d="M2 13l11-7" stroke="#c42d3a" strokeWidth="2" /><path d="M15 3v10" stroke="#1f9b77" strokeDasharray="2 1" /></Ic>,
  <Ic key="2"><path d="M4 2h10l-3 3H1zM4 6h10l-3 3H1zM4 10h10l-3 3H1z" fill="#f0a14a" stroke="#9f5814" /><path d="M12 7h4" stroke="#cc2f24" strokeWidth="2" /></Ic>,
  null,
  <Ic key="3"><path d="M1 3l4-2 10 1v10l-4 3-10-2z" fill="#cf8a3f" stroke="#8c5216" /><path d="M5 5l10-3v10l-4 3z" fill="#e5ae6c" /></Ic>,
  <Ic key="4"><rect x="0.500" y="0.500" width="15" height="15" stroke="#c3641d" strokeDasharray="2 2" strokeWidth="1.500" /><path d="M3 6l3-3h7v7l-3 3H3z" fill="#f0f0f0" stroke="#777" /><path d="M3 6h7v7M10 6l3-3" stroke="#777" /></Ic>,
  <Ic key="5"><path d="M1 6h10v9H1z" fill="#f2f27a" stroke="#235a23" strokeWidth="1.300" /><path d="M1 6l4-4h10v9l-4 4M5 2v9h10M11 6l4-4M1 10h14" stroke="#235a23" strokeWidth="1.200" /></Ic>,
  <Ic key="6"><path d="M1 1v13h5M4 3v9M7 2v10M10 1v6" stroke="#6a6f76" strokeWidth="1.500" /><path d="M9 9l6 6M15 9l-6 6" stroke="#50555c" strokeWidth="1.800" /></Ic>,
  <Ic key="7"><path d="M1 6h3l2-2h5l2 2h2v9H1z" fill="#e8e8e8" stroke="#333" strokeWidth="1.300" /><circle cx="8" cy="10" r="3" fill="#aaa" stroke="#222" strokeWidth="1.300" /><path d="M2 3l3 1M4 1l2 2" stroke="#333" /></Ic>,
  <Share2 key="8" size={15} color="#444" strokeWidth={2.500} />,
];

const quick = [
  <EIcon key="e" />, "|", <NewIcon key="n" />, <OpenIcon key="o" />, <SaveIcon key="s" />, "|", <PrintIcon key="p" />, "on",
  <LensIcon key="l" />, "|", <CutIcon key="c" />, <CopyIcon key="y" />, <PasteIcon key="v" />, "|",
];

const taskIcons = [
  { i: <Ic s={24} v={24}><path d="M7 6V2h10v4" stroke="#3bb4ee" strokeWidth="2" /><rect x="1" y="5" width="22" height="18" rx="2" fill="#f6f6f6" /><path d="M8 9h4v4H8z" fill="#f25022" /><path d="M13 9h4v4h-4z" fill="#7fba00" /><path d="M8 14h4v4H8z" fill="#00a4ef" /><path d="M13 14h4v4h-4z" fill="#ffb900" /></Ic> },
  { i: <Ic s={24} v={24}><circle cx="12" cy="12" r="12" fill="#1172c4" /><path d="M1 9C3 1 14-3 21 4c5 5 3 12-3 12-4 0-4-2-3-4 0-5-8-6-14-3z" fill="#39c8a8" /><path d="M9 12c-3 6 3 11 10 9-6 5-16 3-18-6 0-5 8-8 12-6-2 0-3 1-4 3z" fill="#0b4f9c" /><path d="M15 12c1-3-1-5-3-4 1 1 1 3 1 4 1 4 5 6 10 4-4 0-9-1-8-4z" fill="#251d18" /></Ic>, open: true },
  { i: <Ic s={24} v={24}><path d="M1 9L13 1l10 7v13l-3 2H4z" fill="#2e86ee" /><path d="M6 7l8-5 7 8-9 7z" fill="#8ed0ff" /><path d="M10 18L23 9v12l-3 2H6z" fill="#4aa6ff" /><rect x="0" y="11" width="11" height="11" rx="2" fill="#1259b8" /><circle cx="5.500" cy="16.500" r="2.700" stroke="#fff" strokeWidth="1.700" /></Ic> },
  { i: <Ic s={24} v={24}><path d="M3 0h18v24H3z" fill="#66737f" /><path d="M5 2h14v4H5z" fill="#5cd2f3" /><path d="M5 8h4v4H5zM10 8h4v4h-4zM15 8h4v4h-4zM5 13h4v4H5zM10 13h4v4h-4zM5 18h4v4H5zM10 18h4v4h-4z" fill="#ced4da" /><path d="M15 13h4v9h-4z" fill="#1b4f92" /></Ic>, open: true },
  { i: <Ic s={24} v={24}><path d="M0 0h24v24H0z" fill="#fff" /><path d="M12 2l5 14h-8z" fill="#cfc6a2" /><path d="M14 4l6 13h-7z" fill="#77735c" /><path d="M0 24v-5l5-2 3 1 5-2 5 2 6 1v5z" fill="#2b2d1d" /></Ic> },
  { i: <Ic s={24} v={24}><path d="M6 1h18v22H6z" fill="#2a8ae0" /><path d="M6 7h18v5H6z" fill="#2369c4" /><path d="M6 12h18v11H6z" fill="#164ba0" /><path d="M0 6h13v12H0z" fill="#1a53b0" /><path d="M3 9l1.500 6 2-5 2 5L10 9" stroke="#fff" strokeWidth="1.500" /></Ic>, open: true, bg: "#aa6027", line: "#ff7b05" },
  { i: "pdf" },
  { i: <Ic s={24} v={24}><path d="M6 1h18v22H6z" fill="#1f9a5b" /><path d="M15 1h9v7h-9z" fill="#31c07f" /><path d="M6 14h18v9H6z" fill="#12633a" /><path d="M0 6h13v12H0z" fill="#127a43" /><path d="M4 9l5 6M9 9l-5 6" stroke="#fff" strokeWidth="1.700" /></Ic> },
  { i: <Ic s={24} v={24}><path d="M1 3h8l2 2h12v16H1z" fill="#eeb53a" /><path d="M1 8h22v13H1z" fill="#ffd974" /><path d="M5 13h14v9h-4v-4H9v4H5z" fill="#3f9ae0" /></Ic>, open: true },
  { i: <Ic s={24} v={24}><circle cx="12" cy="12" r="12" fill="#f8c51c" /><path d="M12 12L1.600 6A12 12 0 0 1 22.400 6z" fill="#e33b2e" /><path d="M12 12L1.600 6A12 12 0 0 0 12 24l5-9z" fill="#2da94f" /><circle cx="12" cy="12" r="5.500" fill="#fff" /><circle cx="12" cy="12" r="4.300" fill="#3b7ded" /></Ic>, open: true },
  { i: <Ic s={24} v={24}><path d="M0 0h24v24H0z" fill="#f6f6f6" /><circle cx="17" cy="8" r="7" fill="#f08224" /><path d="M15 3v9M15 8c4-2 5 0 5 4" stroke="#fff" strokeWidth="1.500" /><path d="M1 10l9 12V10l5 12" stroke="#5bc430" strokeWidth="2" /></Ic>, open: true },
  { i: <Ic s={24} v={24}><path d="M1 0h22v21l-4 3H5l-4-3z" fill="#f9dc3f" /><path d="M9 17V4h4c4 0 4 6 0 6H9" stroke="#a31515" strokeWidth="3" /><path d="M4 21h10" stroke="#5d4a10" /></Ic>, open: true },
  { i: <Ic s={24} v={24}><path d="M12 0c7 5 6 10 0 13C6 9 6 5 12 0z" fill="#4aa43b" /><path d="M6 6c-7 6-7 13-5 16 5 1 9-2 10-8-4-2-5-5-5-8z" fill="#7cbf34" /><path d="M18 6c7 6 7 13 5 16-5 1-9-2-10-8 4-2 5-5 5-8z" fill="#3d8f35" /><path d="M12 14c3 2 5 5 9 8-5 3-13 3-18 0 5-1 8-4 9-8z" fill="#ef7d23" /></Ic>, open: true },
  { i: "pdf", open: true },
  { i: <EIcon s={22} />, open: true, bg: "#4c4742" },
];

const PdfIcon = () => (
  <Ic s={22} v={24}><rect width="24" height="24" rx="4" fill="#b30b00" /><path d="M5 19c3-1 8-8 7-14-1-2-3 0-1 4 1 4 5 7 8 6 1-1-1-2-4-2-4 0-8 2-10 4z" stroke="#fff" strokeWidth="1.500" /></Ic>
);

const Big = ({ w, icon, label, on, off, caret = true }) => (
  <BigButton $w={w} $on={on} $off={off}>
    <BigIcon>{icon}</BigIcon>
    {label}
    {caret && <Caret />}
  </BigButton>
);

const RibbonBar = () => (
  <Ribbon>
    <Group $w={165}>
      <GroupBody>
        <Big w={65} on icon={<CursorIcon s={34} />} label="Selezione" />
        <SmallStack><SmallButton aria-label="Su"><Triangle /></SmallButton><SmallButton>0/0</SmallButton><SmallButton aria-label="Giù"><Triangle down /></SmallButton></SmallStack>
        <Divider $h={66} />
        <Big w={68} icon={<PillarIcon />} label="Pilastro" />
      </GroupBody>
      <GroupLabel>Disegno</GroupLabel>
    </Group>
    <Group $w={86}>
      <GroupBody>
        <Big w={52} off icon={<PasteIcon s={30} />} label="Incolla" caret={false} />
        <SmallStack><SmallButton><CopyIcon /></SmallButton><SmallButton><CutIcon /></SmallButton><SmallButton><SelectBoxIcon /></SmallButton></SmallStack>
      </GroupBody>
      <GroupLabel>Appunti</GroupLabel>
    </Group>
    <Group $w={83}>
      <GroupBody>
        <Big w={48} icon={<LensIcon s={30} />} label="Zoom" />
        <SmallStack><SmallButton><ZoomKind kind="window" /></SmallButton><SmallButton><ZoomKind kind="all" /></SmallButton><SmallButton><ZoomKind kind="last" /></SmallButton></SmallStack>
      </GroupBody>
      <GroupLabel>Zoom</GroupLabel>
    </Group>
    <Group $w={78}>
      <GroupBody $left={4}>
        <Big w={42} icon={<SnapIcon />} label="Snap" />
        <SmallStack><SmallButton $on><SnapEndIcon /></SmallButton><SmallButton $on><SnapDotsIcon /></SmallButton><SmallButton><MeshIcon /></SmallButton></SmallStack>
      </GroupBody>
      <GroupLabel>Snap<Launcher /></GroupLabel>
    </Group>
    <Group $w={101}>
      <GroupBody>
        <Big w={66} icon={<PlanIcon />} label="Visualizza" />
        <SmallStack><SmallButton><ThreeDIcon grey /></SmallButton><SmallButton><FloorIcon /></SmallButton><SmallButton><WavesIcon /></SmallButton></SmallStack>
      </GroupBody>
      <GroupLabel>Visualizza</GroupLabel>
    </Group>
    <Group $w={76}>
      <GroupBody $left={4}><Big w={66} icon={<EyeIcon />} label="Visibilità" /></GroupBody>
      <GroupLabel>Visibilità<Launcher /></GroupLabel>
    </Group>
    <Group $w={101}>
      <GroupBody><Big w={90} label={<>Visualizza Dati<br />Cedimenti</>} caret={false} /></GroupBody>
      <GroupLabel>Specchia</GroupLabel>
    </Group>
    <LockButton aria-label="Blocco">
      <svg width="34" height="44" viewBox="0 0 34 44" aria-hidden="true">
        <path d="M7 20V12a10 10 0 0 1 20 0v8" fill="none" stroke="#8a8a8a" strokeWidth="4" />
        <path d="M0 18h33v25H0z" fill="#7d1f2c" /><path d="M1 19h31v20H1z" fill="#b9303f" /><rect x="13" y="25" width="6" height="10" rx="3" fill="#1c1416" />
      </svg>
    </LockButton>
  </Ribbon>
);

const ProjectTree = () => (
  <Tree role="tree">
    {tree.map(([lvl, state, icon, label], i) => (
      <Row key={i} role="treeitem">
        {Array.from({ length: lvl }, (_, k) => (
          <Guide key={k} />
        ))}
        <Junction>
          {state === "open" && <ChevronDown size={13} strokeWidth={3} />}
          {state === "closed" && <ChevronRight size={13} strokeWidth={3} />}
        </Junction>
        {treeIcons[icon]}
        <RowLabel $on={label === "3D"}>{label}</RowLabel>
        {label === "ARMATURE" && <GearButton aria-label="Opzioni"><Settings size={12} /></GearButton>}
      </Row>
    ))}
  </Tree>
);

const PickerBox = () => (
  <svg width="52" height="48" viewBox="0 0 52 48" fill="#fff" stroke="#000" aria-hidden="true">
    <path d="M7 5h38v38H7z" />
    {[3, 22, 41].map((x) => [1, 20, 39].map((y) => (x === 22 && y === 20 ? null : <rect key={x + "-" + y} x={x - 0.5} y={y - 0.5} width="8" height="8" />)))}
    <rect x="17.500" y="19.500" width="8" height="8" fill="#f00" />
    <circle cx="31.500" cy="23.500" r="4" />
  </svg>
);

export default function App() {
  return (
    <Screen>
      <GlobalStyle />
      <Header>
        <div>
          <Quick>
            {quick.map((q, i) => {
              if (q === "|") return <QuickDivider key={i} />;
              if (q === "on") return <QuickButton key={i} $on aria-label="Selezione"><CursorIcon /></QuickButton>;
              return <QuickButton key={i}>{q}</QuickButton>;
            })}
            <QuickButton aria-label="Annulla"><Undo2 size={16} strokeWidth={3} /></QuickButton>
            <Caret color="#98a4b5" />
            <QuickButton aria-label="Ripeti"><Redo2 size={16} strokeWidth={3} /></QuickButton>
            <Caret color="#98a4b5" />
            <Ic s={14}><path d="M1 1v14" stroke="#333" /><path d="M5 4l5 4-5 4zM11 4l5 4-5 4z" fill="#222" /></Ic>
          </Quick>
          <TabRow>
            <Tab $w={58} $home>HOME</Tab>
            <Tab $w={66} $active>Disegno</Tab>
            <Tab $w={70}>Calcolo</Tab>
            <Tab $w={76}>Strumenti</Tab>
            <Tab $w={72}>Finestre</Tab>
            <Tab $w={58}>Servizi</Tab>
            <Tab $w={32}>?</Tab>
          </TabRow>
        </div>
        <ContextTab><strong>Assonometria</strong><span>EDITOR 3D</span></ContextTab>
        <Title>CORPO H - VAR 2_2023 - Vista: 3D - EdiLus CA+PO+EE+AC+MU+LG usBIM (49.00b)</Title>
        <WindowButtons>
          <ButtonLine $gap={22} $end={6}>
            <button aria-label="Riduci"><Minimize /></button><button aria-label="Ripristina"><Restore /></button><button aria-label="Chiudi"><Close /></button>
          </ButtonLine>
          <ButtonLine $gap={10}>
            <button aria-label="Comprimi"><ChevronUp size={13} color="#4b5566" /></button><button aria-label="Riduci vista"><Minimize /></button>
            <button aria-label="Ripristina vista"><Restore /></button><button aria-label="Chiudi vista"><Close /></button>
          </ButtonLine>
        </WindowButtons>
      </Header>
      <RibbonBar />
      <Work>
        <Dock $w={246}>
          <DockTitle $h={25}><TreeRootIcon /><span>Gestione Progetto</span><PinIcon /></DockTitle>
          <Combo $h={21}>
            <select aria-label="Progetto"><option>CORPO H - VAR 2_2023</option></select>
            <ComboArrow $box><Caret /></ComboArrow>
          </Combo>
          <Banner $h={46}>NAVIGATORE<br />[Cemento Armato]</Banner>
          <ProjectTree />
        </Dock>
        <Editor>
          <EditorBar>
            <Combo $w={140} $h={23} $ui>
              <select aria-label="Vista"><option>Editor 3D</option></select>
              <ComboArrow><Caret /></ComboArrow>
            </Combo>
            {editorIcons.map((ic, i) => (ic ? <button key={i}>{ic}</button> : <Divider key={i} $h={22} />))}
            <Caret />
          </EditorBar>
          <ViewGrid>
            <Canvas>
              <Building />
              <Axes width="50" height="62" viewBox="0 0 50 62" aria-hidden="true">
                <path d="M10 48V14" stroke="#3498fd" strokeWidth="4" /><path d="M11 0L18 17H4z" fill="#3498fd" />
                <path d="M10 46l16-5" stroke="#38764a" strokeWidth="3" /><path d="M26 31l14 3-5 11-12-3z" fill="#3f8052" />
                <path d="M12 46l20 6" stroke="#e0274c" strokeWidth="3" /><path d="M31 44l15 13-16 3z" fill="#e0274c" />
                <rect x="7" y="43" width="6" height="7" fill="#17b5ab" />
                <text x="3" y="34" fontSize="13" fontStyle="italic" fill="#2f62b0">z</text>
                <text x="17" y="36" fontSize="12" fill="#38764a">y</text>
                <text x="20" y="47" fontSize="12" fill="#b32020">x</text>
              </Axes>
              <Picker>
                <PickerBox />
                <PickerKeys>{["C", "E", "H", "V"].map((k) => <button key={k}>{k}</button>)}</PickerKeys>
              </Picker>
            </Canvas>
            <ScrollBar $v>
              <Arrow d="M4.500 1L9 7H0z" /><Thumb $v /><Arrow d="M4.500 7L9 1H0z" />
            </ScrollBar>
            <ScrollBar>
              <Arrow d="M1 4.500L7 0v9z" /><Thumb /><Arrow d="M7 4.500L1 0v9z" />
            </ScrollBar>
            <ScrollCorner>s</ScrollCorner>
          </ViewGrid>
        </Editor>
        <Dock $w={318}>
          <DockTitle $h={24}><ListIcon /><span>Proprietà</span><PinIcon /></DockTitle>
          <Banner $h={35} />
          <PropTabs><PropTab $w={62} $on>Proprietà</PropTab><PropTab $w={54}>Risultati</PropTab></PropTabs>
          <PropBody>
            <FilterRow>
              <label htmlFor="filtro">Filtro entità</label>
              <Combo $w={185} $h={19} $off>
                <select id="filtro" disabled />
                <ComboArrow $box><Caret color="#aab2be" /></ComboArrow>
              </Combo>
              <LensIcon s={17} />
            </FilterRow>
            <Split />
          </PropBody>
        </Dock>
        <SideTabs>
          {sideTabs.map(([label, h, icon]) => (
            <SideTab key={label} $h={h}>{icon}<span>{label}</span></SideTab>
          ))}
        </SideTabs>
      </Work>
      <Status>
        <StatusCell>EdiLus CA+PO+EE+AC+MU+LG usBIM (49.00b)</StatusCell>
        <StatusCell $w={225} $pad={3}><Ic s={12}><path d="M0 0h16v16H0z" fill="#fff" /><path d="M2 1h7v13H2z" fill="#3c86c8" /><path d="M10 9h5v5h-5z" fill="#d7903c" /></Ic><strong>Solai e Balconi</strong></StatusCell>
        <StatusCell $w={145} $pad={3}>X: 21.39 - Y: 15.75 - Z: 0.00</StatusCell>
        <StatusCell $w={26} />
        <StatusCell $w={28} />
        <StatusEnd>
          <Ic s={22}><path d="M4 3h8v11H4z" fill="#e7e7ee" stroke="#777" /><circle cx="9" cy="5" r="3" fill="#fff" stroke="#888" /><path d="M11 7l4 3" stroke="#c98a2c" strokeWidth="2" /><path d="M3 10l4 4M7 10l-4 4" stroke="#d22" strokeWidth="1.500" /></Ic>
        </StatusEnd>
      </Status>
      <Taskbar>
        <StartButton aria-label="Start">
          <Ic s={16}><path d="M0 2l7-1v6.500H0zM8 1l8-1v7.500H8zM0 8.500h7V15l-7-1zM8 8.500h8V16l-8-1z" fill="#fff" /></Ic>
        </StartButton>
        <SearchBox><Search size={17} strokeWidth={1.500} transform="scale(-1 1)" /><input placeholder="Cerca" aria-label="Cerca" /></SearchBox>
        {taskIcons.map((t, i) => (
          <TaskButton key={i} $open={t.open} $bg={t.bg} $line={t.line}>{t.i === "pdf" ? <PdfIcon /> : t.i}</TaskButton>
        ))}
        <Tray>
          <Weather>
            <Ic s={22} v={22}><circle cx="10" cy="10" r="10" fill="#f49b1f" /><path d="M10 19a4 4 0 0 1 1-7 5 5 0 0 1 9 2 3 3 0 0 1-1 5z" fill="#b7d3fb" /></Ic>
            <span>24°C</span><span>Soleggiato</span>
          </Weather>
          <Ic s={20} v={20}><path d="M4 13l6-6 6 6" stroke="#fff" strokeWidth="1.600" /></Ic>
          <Ic s={16}><rect x="2" y="4" width="9" height="8" rx="2" stroke="#fff" strokeWidth="1.300" /><path d="M11 7l3-2v6l-3-2M4 1.500h6M4 14.500h6" stroke="#fff" strokeWidth="1.300" /></Ic>
          <Ic s={16}><path d="M2 15C2 8 8 2 15 2M5 15C5 9 9 6 15 5M8 15c0-4 3-6 7-6.500M11 15c0-2 2-3 4-3" stroke="#ddd" strokeWidth="1.300" /><circle cx="14" cy="14" r="1.500" fill="#fff" /></Ic>
          <Ic s={18}><path d="M1 6h3l3-3v10l-3-3H1zM9 6c1 1 1 3 0 4M11 4c2 2 2 6 0 8M13 2c3 3 3 9 0 12" stroke="#fff" strokeWidth="1.100" /></Ic>
          <Clock>11:38<br />27/09/2026</Clock>
          <Notice aria-label="Notifiche">
            <Ic s={18}><path d="M1 1h14v10H8l-4 4v-4H1z" fill="#fff" /><path d="M3 4h10M3 6.500h10M3 9h7" stroke="#251d18" /></Ic>
            <Badge>4</Badge>
          </Notice>
        </Tray>
      </Taskbar>
    </Screen>
  );
}
